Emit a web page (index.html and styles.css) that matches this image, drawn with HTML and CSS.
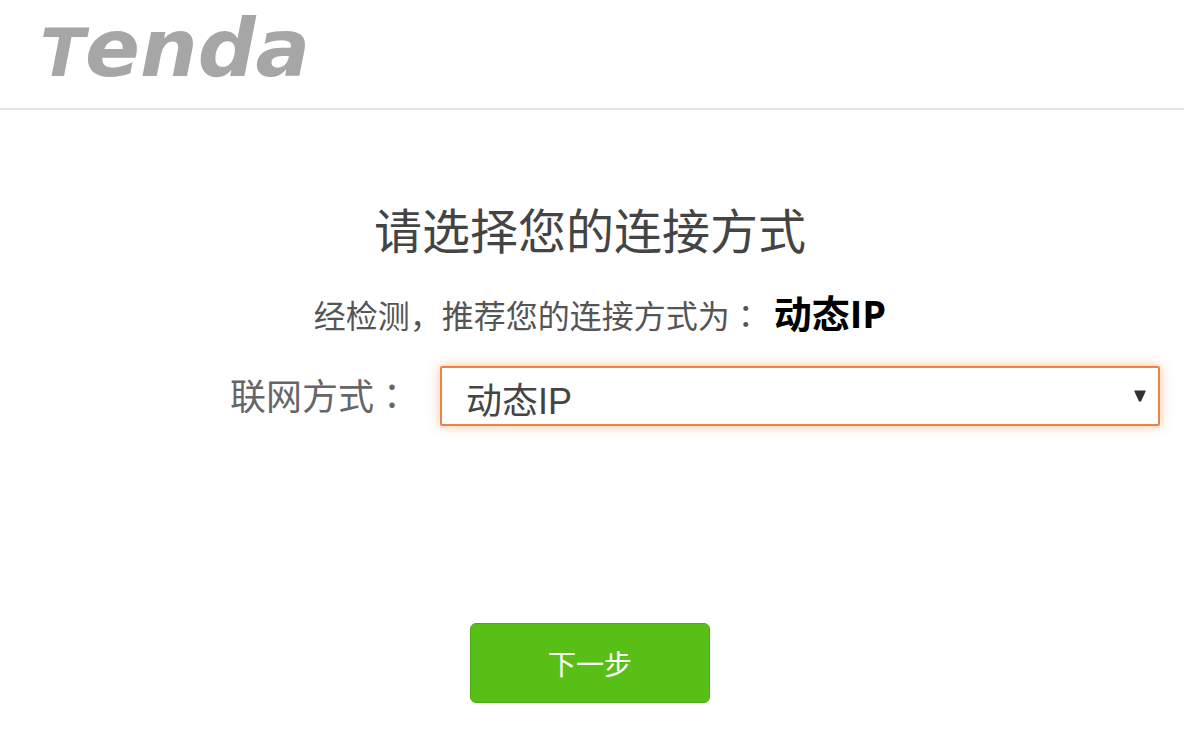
FILE: index.html
```html
<!DOCTYPE html>
<html lang="zh-CN">

<head>
    <meta charset="UTF-8">
    <meta name="viewport" content="width=device-width, initial-scale=1.0">
    <title>Tenda</title>
    <link rel="stylesheet" href="styles.css">
</head>

<body>
    <header class="header">
        <div class="logo"><span class="logo-cap">T</span>enda</div>
    </header>

    <main class="main">
        <h1 class="title">请选择您的连接方式</h1>
        <p class="tip">经检测，推荐您的连接方式为<span class="colon" lang="zh-TW">：</span><strong class="tip-type">动态IP</strong></p>

        <form class="form">
            <div class="row">
                <label class="row-label" for="netType">联网方式<span class="colon" lang="zh-TW">：</span></label>
                <div class="select-box">
                    <select class="select" id="netType" name="netType">
                        <option value="dhcp" selected>动态IP</option>
                        <option value="static">静态IP</option>
                        <option value="pppoe">宽带拨号</option>
                    </select>
                    <svg class="select-arrow" viewBox="0 0 12 12" aria-hidden="true">
                        <path d="M0 0.5H12L7 11.5H5Z" />
                    </svg>
                </div>
            </div>
            <button class="btn-next" type="button">下一步</button>
        </form>
    </main>
</body>

</html>
```

FILE: styles.css
```css
* {
    box-sizing: border-box;
}

body {
    margin: 0;
    background-color: #fff;
    color: #444;
    font-family: "Open Sans", "Noto Sans CJK SC", sans-serif;
}

.header {
    height: 110px;
    padding: 0 40px;
    border-bottom: 2px solid #e2e2e2;
}

.logo {
    color: #a6a6a6;
    font-family: "DejaVu Sans", sans-serif;
    font-size: 81px;
    font-style: italic;
    font-weight: bold;
    line-height: 96px;
}

.logo-cap {
    font-size: 66px;
}

.main {
    padding: 87px 4px 0 0;
}

.title {
    margin: 0;
    font-size: 48px;
    font-weight: normal;
    line-height: 68px;
    text-align: center;
}

.tip {
    margin: 0;
    padding: 22px 0 0 20px;
    color: #555;
    font-size: 32px;
    line-height: 52px;
    text-align: center;
}

.tip-type {
    margin-left: 12px;
    color: #000;
    font-size: 38px;
}

/* full-width colon centred in its cell */
.colon {
    font-family: "Noto Sans CJK TC", sans-serif;
}

.row {
    display: flex;
    align-items: center;
    gap: 30px;
    margin-top: 22px;
    padding: 0 20px 0 230px;
}

.row-label {
    flex: none;
    color: #666;
    font-size: 36px;
    line-height: 60px;
}

.select-box {
    position: relative;
    flex: 1;
}

.select {
    display: block;
    width: 100%;
    height: 60px;
    padding: 12px 24px 0;
    border: 2px solid #ed8345;
    border-radius: 2px;
    outline: none;
    background-color: #fff;
    box-shadow: 0 0 12px rgba(255, 120, 30, 0.45);
    color: #444;
    font-family: "Liberation Sans", "Noto Sans CJK SC", sans-serif;
    font-size: 36px;
    appearance: none;
}

.select-arrow {
    position: absolute;
    top: 24px;
    right: 14px;
    width: 12px;
    height: 12px;
    fill: #333;
    pointer-events: none;
}

.btn-next {
    display: block;
    width: 240px;
    height: 80px;
    margin: 196px auto 0;
    padding: 0;
    border: 1px solid #4dac14;
    border-radius: 6px;
    background-color: #58bf16;
    color: #fff;
    font-family: inherit;
    font-size: 28px;
    cursor: pointer;
}

.btn-next:hover {
    background-color: #50b012;
}
```
